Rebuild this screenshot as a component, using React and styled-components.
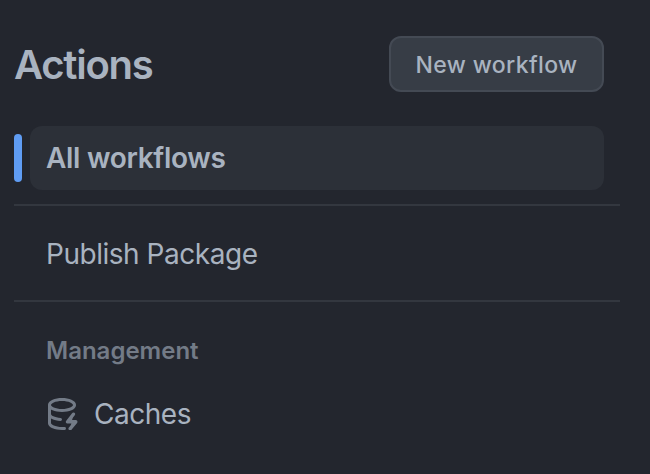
import React from 'react';
import styled, { createGlobalStyle } from 'styled-components';

const GlobalStyle = createGlobalStyle`
  html, body {
    margin: 0;
    background: #23262e;
  }
  body {
    font-family: 'Inter', 'Liberation Sans', sans-serif;
    color: #a9b3c0;
  }
`;

const CacheIcon = () => (
  <Icon viewBox="0 0 16 16" aria-hidden="true">
    <path d="M2.5 5.724V8c0 .248.238.7 1.169 1.159.874.43 2.144.745 3.62.822a.75.75 0 1 1-.078 1.498c-1.622-.085-3.102-.432-4.204-.975a5.565 5.565 0 0 1-.507-.28V12.5c0 .133.058.318.282.551.227.237.591.483 1.101.707 1.015.447 2.47.742 4.117.742.406 0 .802-.018 1.18-.052a.75.75 0 0 1 .134 1.494C8.89 15.98 8.45 16 8 16c-1.805 0-3.475-.32-4.721-.869-.623-.274-1.173-.619-1.579-1.041-.408-.425-.7-.964-.7-1.59V3.5c0-.626.292-1.165.7-1.591.406-.42.956-.766 1.579-1.04C4.525.32 6.195 0 8 0c1.806 0 3.476.32 4.721.869.623.274 1.173.619 1.579 1.041.408.425.7.964.7 1.59 0 .626-.292 1.165-.7 1.591-.406.42-.956.766-1.578 1.04C11.475 6.68 9.805 7 8 7c-1.805 0-3.475-.32-4.721-.869a6.15 6.15 0 0 1-.779-.407Zm0-2.224c0 .133.058.318.282.551.227.237.591.483 1.101.707C4.898 5.205 6.353 5.5 8 5.5c1.646 0 3.101-.295 4.118-.742.508-.224.873-.471 1.1-.708.224-.232.282-.417.282-.55 0-.133-.058-.318-.282-.551-.227-.237-.591-.483-1.101-.707C11.102 1.795 9.647 1.5 8 1.5c-1.646 0-3.101.295-4.118.742-.508.224-.873.471-1.1.708-.224.232-.282.417-.282.55Z" />
    <Bolt d="M13.7 8.1 10.8 11.9H14.9L12.1 15.3" />
  </Icon>
);

const App = () => (
  <>
    <GlobalStyle />
    <Sidebar>
      <Header>
        <Title>Actions</Title>
        <NewButton>New workflow</NewButton>
      </Header>
      <Row>
        <Indicator $active />
        <Item $active>All workflows</Item>
      </Row>
      <Divider />
      <Row>
        <Indicator />
        <Item>Publish Package</Item>
      </Row>
      <Divider />
      <SectionLabel>Management</SectionLabel>
      <Row>
        <Indicator />
        <Item>
          <CacheIcon />
          Caches
        </Item>
      </Row>
    </Sidebar>
  </>
);

export default App;

const Sidebar = styled.nav`
  width: 606px;
  margin-left: 14px;
  padding-top: 36px;
`;

const Header = styled.header`
  display: flex;
  align-items: center;
  justify-content: space-between;
  margin-right: 16px;
  margin-bottom: 34px;
`;

const Title = styled.h2`
  margin: 1px 0 -1px;
  font-size: 40px;
  line-height: 56px;
  font-weight: 600;
  letter-spacing: -1.25px;
  color: #a9b3c0;
`;

const NewButton = styled.button`
  box-sizing: border-box;
  width: 215px;
  height: 56px;
  padding: 2px 0 0;
  border: 2px solid #444a54;
  border-radius: 12px;
  background: #373d46;
  color: #a9b3c0;
  font-family: inherit;
  font-size: 23px;
  font-weight: 500;
  letter-spacing: 0.38px;
`;

const Row = styled.div`
  display: flex;
  align-items: center;
  gap: 8px;
  margin-right: 16px;
`;

const Indicator = styled.span`
  flex: none;
  width: 8px;
  height: 48px;
  border-radius: 4px;
  background: ${(p) => (p.$active ? '#5f9cf3' : 'transparent')};
`;

const Item = styled.div`
  flex: 1;
  display: flex;
  align-items: center;
  gap: 16px;
  height: 64px;
  padding: 0 16px;
  border-radius: 12px;
  background: ${(p) => (p.$active ? '#2c3038' : 'transparent')};
  font-size: 28px;
  font-weight: ${(p) => (p.$active ? 600 : 400)};
  letter-spacing: ${(p) => (p.$active ? '-0.3px' : '-0.47px')};
  color: #a9b3c0;
`;

const Divider = styled.hr`
  height: 2px;
  margin: 14px 0 16px;
  border: 0;
  background: #33373f;
`;

const SectionLabel = styled.div`
  margin: 31px 0 13px 32px;
  font-size: 24px;
  line-height: 36px;
  font-weight: 600;
  color: #737b87;
`;

const Icon = styled.svg`
  flex: none;
  width: 32px;
  height: 32px;
  fill: #737b87;
`;

const Bolt = styled.path`
  fill: #737b87;
  stroke: #737b87;
  stroke-width: 1.7;
  stroke-linecap: round;
  stroke-linejoin: round;
`;
